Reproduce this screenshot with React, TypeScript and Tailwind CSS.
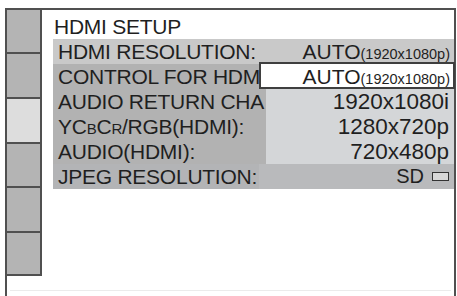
const sideTabs = [
  "h-[44px] bg-[#b4b4b4]",
  "h-[45px] bg-[#b4b4b4]",
  "h-[45px] bg-[#dddddd]",
  "h-[44px] bg-[#b4b4b4]",
  "h-[45px] bg-[#b4b4b4]",
  "h-[43px] bg-[#b4b4b4]",
];

function Resolution() {
  return (
    <span className="whitespace-nowrap">
      <span className="text-[21px]">AUTO</span>
      <span className="text-[14.5px]">(1920x1080p)</span>
    </span>
  );
}

function Label({ children, className = "" }: { children: React.ReactNode; className?: string }) {
  return (
    <div
      className={`h-[25px] whitespace-nowrap pl-[5px] text-[21px] leading-[25px] tracking-[-0.25px] ${className}`}
    >
      {children}
    </div>
  );
}

function Option({ text }: { text: string }) {
  return (
    <div className="h-[25px] border-l-[7px] border-[#b2b2b2] bg-[#d4d6d8] pr-[5px] text-right text-[22.5px] leading-[25px]">
      {text}
    </div>
  );
}

export default function App() {
  return (
    <div className="h-[296px] w-[457px] overflow-hidden bg-white pl-[5px] pt-[8px] font-['Liberation_Sans',Arial,sans-serif] text-[#1f1f1f]">
      <div className="flex h-[288px] w-[451px] flex-col border-x-2 border-t-2 border-[#505050]">
        <div className="flex">
          <div className="w-[35px] border-r-2 border-[#505050]">
            {sideTabs.map((c, i) => (
              <div key={i} className={`border-b-2 border-[#505050] ${c}`} />
            ))}
          </div>

          <div className="flex-1 pl-[11px] pt-[4px]">
            <div className="h-[25px] pl-px text-[21px] leading-[25px] tracking-[-0.25px]">
              HDMI SETUP
            </div>

            <div className="grid grid-cols-[206px_1fr]">
              <Label className="bg-[#c9c9c9]">HDMI RESOLUTION:</Label>
              <div className="h-[25px] bg-[#c9c9c9] pr-[4px] text-right leading-[25px]">
                <Resolution />
              </div>

              <Label className="bg-[#b2b2b2]">CONTROL FOR HDM</Label>
              <div className="-mr-px -mt-[2px] h-[27px] border-2 border-[#3f3f3f] bg-white pr-[3px] text-right leading-[25px]">
                <Resolution />
              </div>

              <Label className="relative z-10 bg-[#b2b2b2]">AUDIO RETURN CHA</Label>
              <Option text="1920x1080i" />

              <Label className="bg-[#b2b2b2]">
                YC<span className="text-[15px]">B</span>C<span className="text-[15px]">R</span>/RGB(HDMI):
              </Label>
              <Option text="1280x720p" />

              <Label className="bg-[#b2b2b2]">AUDIO(HDMI):</Label>
              <Option text="720x480p" />

              <Label className="bg-[#b3b4b6]">JPEG RESOLUTION:</Label>
              <div className="flex h-[25px] items-center justify-end gap-[8px] bg-[#b9babc] pr-[5px]">
                <span className="text-[20px] leading-[25px]">SD</span>
                <span className="h-[9px] w-[17px] border-[1.5px] border-[#333] bg-[#d8d8d8]" />
              </div>
            </div>
          </div>
        </div>

        <div className="mx-[3px] mb-[5px] mt-auto h-px bg-[#ebebeb]" />
      </div>
    </div>
  );
}
